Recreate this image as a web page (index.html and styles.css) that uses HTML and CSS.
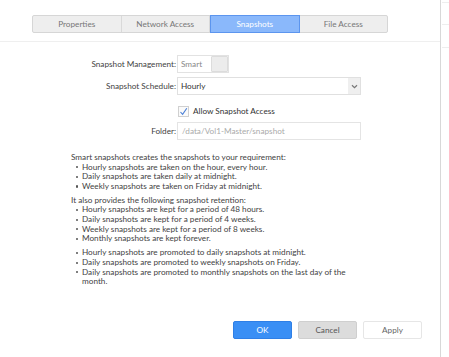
FILE: index.html
```html
<!DOCTYPE html>
<html>
<head>
<meta charset="utf-8">
<link rel="stylesheet" href="styles.css">
</head>
<body>
<div class="page">
  <div class="panel">
    <div class="tabs">
      <div class="tab">Properties</div>
      <div class="tab">Network Access</div>
      <div class="tab active">Snapshots</div>
      <div class="tab">File Access</div>
    </div>
    <div class="divider"></div>
    <div class="form">
      <div class="row">
        <div class="label">Snapshot Management:</div>
        <div class="toggle"><span class="toggle-text">Smart</span><span class="knob"></span></div>
      </div>
      <div class="row">
        <div class="label">Snapshot Schedule:</div>
        <div class="select"><span class="select-text">Hourly</span><span class="arrow"><svg width="7" height="5" viewBox="0 0 7 5"><path d="M1 1.2 L3.5 3.6 L6 1.2" fill="none" stroke="#777" stroke-width="1.2"/></svg></span></div>
      </div>
      <div class="row check-row">
        <div class="label"></div>
        <div class="check"><span class="box"><svg width="11" height="11" viewBox="0 0 11 11"><path d="M2.5 6 L4.6 8.3 L8.8 2.2" fill="none" stroke="#4a7fd6" stroke-width="1.1"/></svg></span><span>Allow Snapshot Access</span></div>
      </div>
      <div class="row">
        <div class="label">Folder:</div>
        <div class="input">/data/Vol1-Master/snapshot</div>
      </div>
    </div>
    <div class="desc">
      <p>Smart snapshots creates the snapshots to your requirement:</p>
      <ul>
        <li>Hourly snapshots are taken on the hour, every hour.</li>
        <li>Daily snapshots are taken daily at midnight.</li>
        <li>Weekly snapshots are taken on Friday at midnight.</li>
      </ul>
      <p>It also provides the following snapshot retention:</p>
      <ul>
        <li>Hourly snapshots are kept for a period of 48 hours.</li>
        <li>Daily snapshots are kept for a period of 4 weeks.</li>
        <li>Weekly snapshots are kept for a period of 8 weeks.</li>
        <li>Monthly snapshots are kept forever.</li>
      </ul>
      <ul>
        <li>Hourly snapshots are promoted to daily snapshots at midnight.</li>
        <li>Daily snapshots are promoted to weekly snapshots on Friday.</li>
        <li>Daily snapshots are promoted to monthly snapshots on the last day of the month.</li>
      </ul>
    </div>
    <div class="buttons">
      <div class="btn ok">OK</div>
      <div class="btn cancel">Cancel</div>
      <div class="btn apply">Apply</div>
    </div>
  </div>
  <div class="side">
    <div class="tick t1"></div>
    <div class="tick t2"></div>
    <div class="tick t3"></div>
  </div>
</div>
</body>
</html>
```
FILE: styles.css
```css
html, body {
  margin: 0;
  padding: 0;
  background: #fff;
}
body {
  font-family: "Lato", "Open Sans", sans-serif;
  font-size: 8.2px;
  color: #3f3f3f;
}
.page {
  display: flex;
  width: 449px;
  height: 357px;
  overflow: hidden;
}
.panel {
  width: 441px;
  height: 357px;
  border-right: 1px solid #d8d8d8;
  box-sizing: border-box;
  display: flex;
  flex-direction: column;
}
.side {
  flex: 1;
  display: flex;
  flex-direction: column;
}
.tick {
  height: 1px;
  background: #eee;
  margin-left: 1px;
}
.t1 { margin-top: 2px; }
.t2 { margin-top: 21px; }
.t3 { margin-top: 22px; }
.tabs {
  display: flex;
  margin: 15px 0 0 32px;
  width: 356px;
  height: 18px;
  border: 1px solid #d6d6d6;
  border-radius: 2px;
  background: #eeeeee;
  box-sizing: border-box;
}
.tab {
  flex: 1;
  display: flex;
  align-items: center;
  justify-content: center;
  color: #777;
  border-right: 1px solid #d9d9d9;
}
.tab:last-child { border-right: none; }
.tab.active {
  background: #8ab8fb;
  color: #fff;
  border: 1px solid #5c95ee;
  margin: -1px 0;
}
.divider {
  height: 1px;
  background: #efefef;
  margin-top: 8px;
}
.form {
  display: flex;
  flex-direction: column;
  margin-top: 13px;
  gap: 4px;
}
.row {
  display: grid;
  grid-template-columns: 177px auto;
  align-items: center;
  height: 18px;
}
.label {
  text-align: right;
  padding-right: 1px;
}
.toggle {
  width: 52px;
  height: 18px;
  border: 1px solid #e2e2e2;
  box-sizing: border-box;
  display: flex;
  align-items: center;
  justify-content: space-between;
  padding-left: 3px;
}
.toggle-text { color: #888; }
.knob {
  width: 17px;
  height: 16px;
  background: #ececec;
  border: 1px solid #dcdcdc;
  box-sizing: border-box;
  border-radius: 1px;
}
.select {
  width: 184px;
  height: 18px;
  border: 1px solid #e0e0e0;
  box-sizing: border-box;
  display: flex;
  align-items: center;
}
.select-text {
  flex: 1;
  padding-left: 3px;
  color: #333;
}
.arrow {
  width: 12px;
  height: 16px;
  background: #efefef;
  display: flex;
  align-items: center;
  justify-content: center;
}
.check-row {
  margin-top: 5px;
  height: 14px;
}
.check {
  display: flex;
  align-items: center;
  gap: 4px;
  padding-left: 1px;
  color: #333;
}
.box {
  width: 11px;
  height: 11px;
  border: 1px solid #d0d0d0;
  box-sizing: border-box;
  display: flex;
  background: #fafafa;
}
.box svg { margin: -1px; }
.input {
  width: 184px;
  height: 18px;
  border: 1px solid #e4e4e4;
  box-sizing: border-box;
  display: flex;
  align-items: center;
  padding-left: 4px;
  color: #aaa;
}
.desc {
  margin: 13px 0 0 71px;
  width: 290px;
  line-height: 9.6px;
}
.desc p { margin: 0; }
.desc ul {
  margin: 0 0 4.5px 0;
  padding-left: 5px;
  list-style: none;
}
.desc li {
  position: relative;
  padding-left: 6px;
}
.desc li::before {
  content: "";
  position: absolute;
  left: 0;
  top: 3.6px;
  width: 2.2px;
  height: 2.2px;
  border-radius: 50%;
  background: #555;
}
.buttons {
  margin-top: auto;
  margin-bottom: 18px;
  display: flex;
  gap: 6px;
  margin-left: 233px;
}
.btn {
  width: 59px;
  height: 18px;
  box-sizing: border-box;
  border-radius: 2px;
  display: flex;
  align-items: center;
  justify-content: center;
}
.ok {
  background: #3a8ff5;
  border: 1px solid #2f7fe6;
  color: #fff;
}
.cancel {
  background: #dcdcdc;
  border: 1px solid #cfcfcf;
  color: #555;
}
.apply {
  background: #fff;
  border: 1px solid #e6e6e6;
  color: #666;
}
```
